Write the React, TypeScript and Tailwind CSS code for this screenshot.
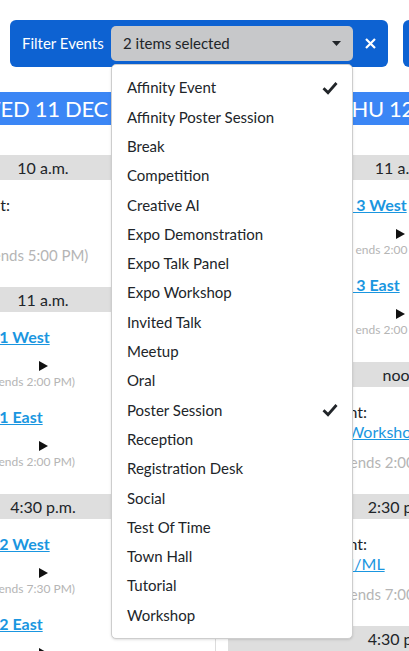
import React from "react";

const FILTERS = [
  "Affinity Event",
  "Affinity Poster Session",
  "Break",
  "Competition",
  "Creative AI",
  "Expo Demonstration",
  "Expo Talk Panel",
  "Expo Workshop",
  "Invited Talk",
  "Meetup",
  "Oral",
  "Poster Session",
  "Reception",
  "Registration Desk",
  "Social",
  "Test Of Time",
  "Town Hall",
  "Tutorial",
  "Workshop",
];

const SELECTED = ["Affinity Event", "Poster Session"];

type Event =
  | { kind: "poster"; title: string; note: string }
  | { kind: "affinity"; title: string; note: string };

type Slot = { time: string; events: Event[] };

const DAYS: { label: string; slots: Slot[] }[] = [
  {
    label: "WED 11 DEC",
    slots: [
      {
        time: "10 a.m.",
        events: [{ kind: "affinity", title: "Queer in AI", note: "(Room 211-214 ends 5:00 PM)" }],
      },
      {
        time: "11 a.m.",
        events: [
          { kind: "poster", title: "Poster Session 1 West", note: "(Exhibit Halls A-C, ends 2:00 PM)" },
          { kind: "poster", title: "Poster Session 1 East", note: "(Exhibit Halls A-C, ends 2:00 PM)" },
        ],
      },
      {
        time: "4:30 p.m.",
        events: [
          { kind: "poster", title: "Poster Session 2 West", note: "(Exhibit Halls A-C, ends 7:30 PM)" },
          { kind: "poster", title: "Poster Session 2 East", note: "(Exhibit Halls A-C, ends 7:30 PM)" },
        ],
      },
    ],
  },
  {
    label: "THU 12 DEC",
    slots: [
      {
        time: "11 a.m.",
        events: [
          { kind: "poster", title: "Poster Session 3 West", note: "(Exhibit Halls A-C, ends 2:00 PM)" },
          { kind: "poster", title: "Poster Session 3 East", note: "(Exhibit Halls A-C, ends 2:00 PM)" },
        ],
      },
      {
        time: "noon",
        events: [{ kind: "affinity", title: "Muslims in ML Workshop", note: "(Room 211-214 ends 2:00 PM)" }],
      },
      {
        time: "2:30 p.m.",
        events: [{ kind: "affinity", title: "Indigenous in AI/ML", note: "(Room 211-214 ends 7:00 PM)" }],
      },
      {
        time: "4:30 p.m.",
        events: [],
      },
    ],
  },
];

function Check() {
  return (
    <svg width="16" height="14" viewBox="0 0 16 14" fill="none">
      <path d="M1.5 7.2 L6 11.6 L14.5 2" stroke="#212529" strokeWidth="2.8" />
    </svg>
  );
}

function FilterBar() {
  return (
    <div className="flex gap-[15px] pl-[10px] pt-5">
      <div className="flex h-[47px] w-[378px] shrink-0 items-center rounded-[6px] bg-[#0d62d2]">
        <span className="w-[101px] pl-3 text-[15px] text-white">Filter Events</span>
        <div className="relative">
          <div className="flex h-[35px] w-[242px] items-center justify-between rounded-[5px] bg-[#c7c8ca] pl-3 pr-[12px] text-[15px] text-[#212529]">
            <span>2 items selected</span>
            <svg width="9" height="5" viewBox="0 0 9 5">
              <polygon points="0,0 9,0 4.5,5" fill="#212529" />
            </svg>
          </div>
          <ul className="absolute left-0 top-full z-10 mt-[3px] w-[242px] rounded-[5px] border border-[#cdcdcd] bg-white py-2 shadow-sm">
            {FILTERS.map((f) => (
              <li
                key={f}
                className="flex h-[29.3px] items-center justify-between pl-[15px] pr-[14px] text-[15px] text-[#212529]"
              >
                <span>{f}</span>
                {SELECTED.includes(f) && <Check />}
              </li>
            ))}
          </ul>
        </div>
        <div className="flex flex-1 justify-center">
          <svg width="11" height="11" viewBox="0 0 11 11">
            <path d="M1 1 L10 10 M10 1 L1 10" stroke="white" strokeWidth="2.2" />
          </svg>
        </div>
      </div>
      <div className="h-[47px] w-[60px] shrink-0 rounded-[6px] bg-[#0d62d2]" />
    </div>
  );
}

function EventView({ ev }: { ev: Event }) {
  if (ev.kind === "poster") {
    return (
      <div className="whitespace-nowrap px-[21px]">
        <a className="block h-5 text-[16px] font-bold leading-5 text-[#1a96e0] underline">{ev.title}</a>
        <div className="mt-[11px] flex h-4 items-center justify-center">
          <svg width="9" height="10" viewBox="0 0 9 10">
            <polygon points="0,0 9,5 0,10" fill="#111" />
          </svg>
        </div>
        <div className="h-4 pl-[9px] text-[12px] leading-4 text-[#b5b5b5]">{ev.note}</div>
      </div>
    );
  }
  return (
    <div className="whitespace-nowrap px-[14px]">
      <div className="h-5 pl-[26px] text-[16px] leading-5 text-[#212529]">Affinity Event:</div>
      <a className="block h-5 text-[16px] leading-5 text-[#1a96e0] underline">{ev.title}</a>
      <div className="mt-3 h-4 text-[15px] leading-4 text-[#b5b5b5]">{ev.note}</div>
    </div>
  );
}

function DayColumn({ label, slots, last }: { label: string; slots: Slot[]; last?: boolean }) {
  return (
    <div className={"w-[345px] shrink-0 " + (last ? "" : "border-r border-[#dcdcdc]")}>
      <div className="h-[33px] bg-[#3b86f5] text-center text-[22px] leading-[33px] tracking-[-0.3px] text-white">
        {label}
      </div>
      <div className="mt-[30px]">
        {slots.map((s) => (
          <div key={s.time}>
            <div className="h-[25px] bg-[#dedede] text-center text-[16px] leading-[25px] text-[#212529]">{s.time}</div>
            <div className="flex flex-col gap-[17px] pb-6 pt-[15px]">
              {s.events.map((ev) => (
                <EventView key={ev.title} ev={ev} />
              ))}
            </div>
          </div>
        ))}
      </div>
    </div>
  );
}

export default function App() {
  return (
    <div className="relative h-[651px] w-[409px] overflow-hidden bg-white font-['Lato','Noto_Sans',sans-serif]">
      <div className="relative z-10">
        <FilterBar />
      </div>
      <div className="ml-[-129px] mt-[25px] flex gap-[12px]">
        <DayColumn label={DAYS[0].label} slots={DAYS[0].slots} />
        <DayColumn label={DAYS[1].label} slots={DAYS[1].slots} last />
      </div>
    </div>
  );
}
